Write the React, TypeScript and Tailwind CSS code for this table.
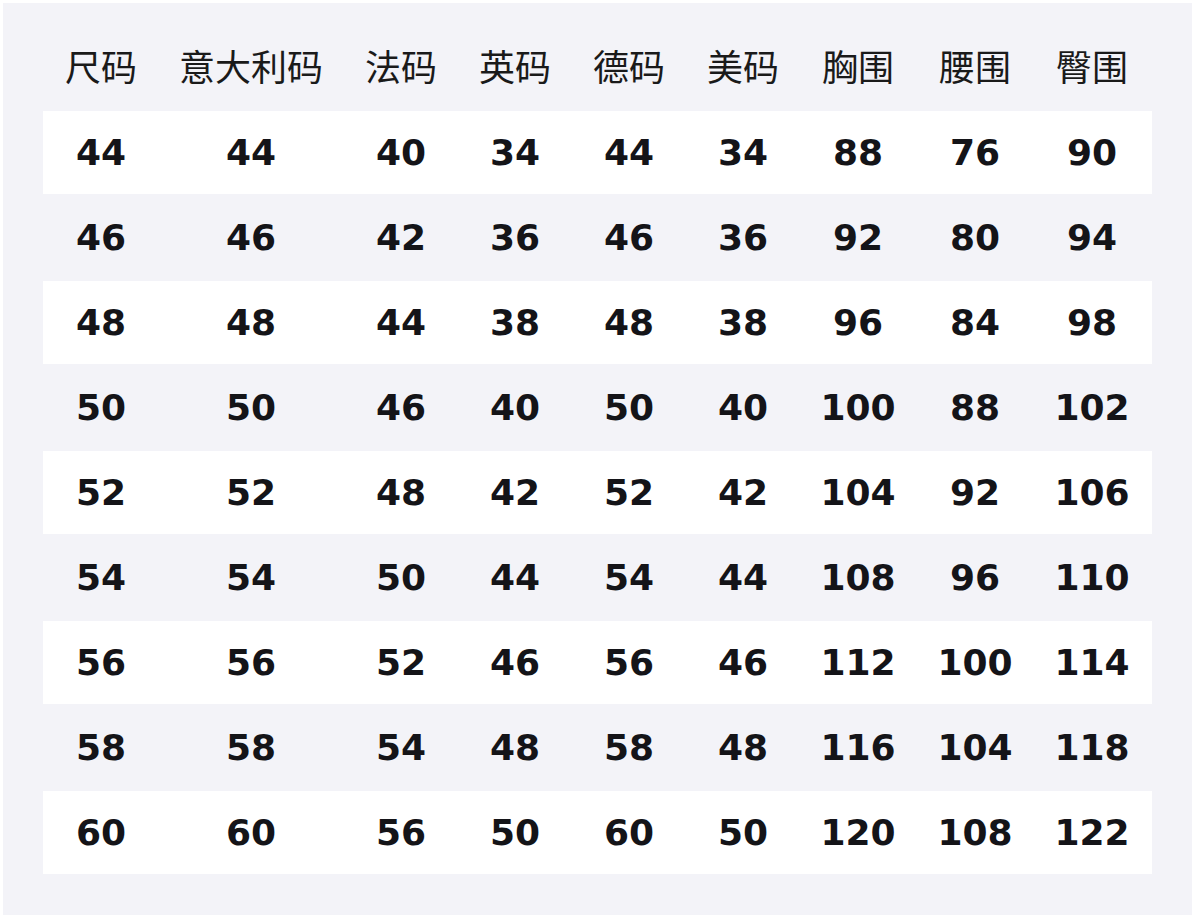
const headers = ['尺码', '意大利码', '法码', '英码', '德码', '美码', '胸围', '腰围', '臀围'];

const rows = [
  [44, 44, 40, 34, 44, 34, 88, 76, 90],
  [46, 46, 42, 36, 46, 36, 92, 80, 94],
  [48, 48, 44, 38, 48, 38, 96, 84, 98],
  [50, 50, 46, 40, 50, 40, 100, 88, 102],
  [52, 52, 48, 42, 52, 42, 104, 92, 106],
  [54, 54, 50, 44, 54, 44, 108, 96, 110],
  [56, 56, 52, 46, 56, 46, 112, 100, 114],
  [58, 58, 54, 48, 58, 48, 116, 104, 118],
  [60, 60, 56, 50, 60, 50, 120, 108, 122],
];

const cols = 'grid grid-cols-[116px_184px_116px_112px_116px_112px_118px_116px_118px]';

export default function App() {
  return (
    <div className="w-[1195px] h-[918px] bg-white p-[3px]">
      <div className="h-full bg-[#f3f3f8] pl-[40px] pr-[40px] pt-[22px]">
        <div className={`${cols} h-[85px] pb-[6px] items-center text-[36px] text-[#1a1a1a] font-['Noto_Sans_CJK_SC',sans-serif]`}>
          {headers.map((h) => (
            <div key={h} className="text-center leading-none">{h}</div>
          ))}
        </div>
        {rows.map((row, i) => (
          <div
            key={i}
            className={`${cols} h-[85px] items-center border-y border-[#f3f3f8] text-[36px] font-bold text-[#141418] font-['DejaVu_Sans',sans-serif] ${
              i % 2 === 0 ? 'bg-white' : 'bg-[#f3f3f8]'
            }`}
          >
            {row.map((v, j) => (
              <div key={j} className="text-center leading-none">{v}</div>
            ))}
          </div>
        ))}
      </div>
    </div>
  );
}
